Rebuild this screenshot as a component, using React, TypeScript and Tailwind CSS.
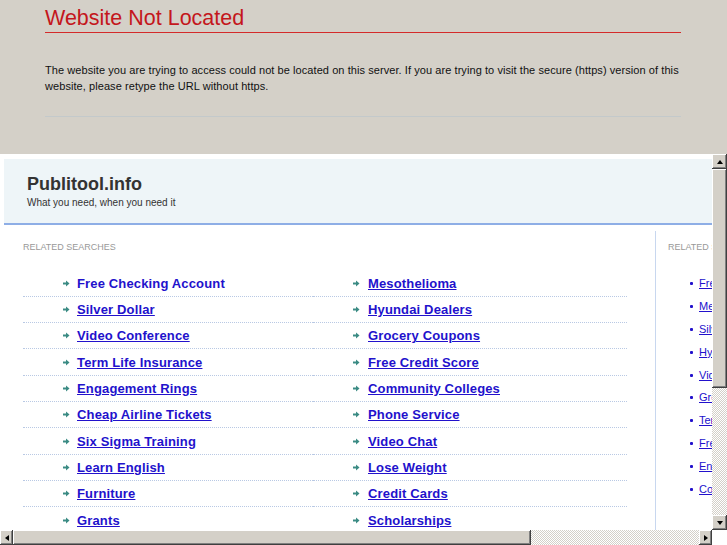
import React from "react";

const leftLinks = [
  "Free Checking Account",
  "Silver Dollar",
  "Video Conference",
  "Term Life Insurance",
  "Engagement Rings",
  "Cheap Airline Tickets",
  "Six Sigma Training",
  "Learn English",
  "Furniture",
  "Grants",
];

const rightLinks = [
  "Mesothelioma",
  "Hyundai Dealers",
  "Grocery Coupons",
  "Free Credit Score",
  "Community Colleges",
  "Phone Service",
  "Video Chat",
  "Lose Weight",
  "Credit Cards",
  "Scholarships",
];

const sideLinks = [
  "Free Checking Account",
  "Mesothelioma",
  "Silver Dollar",
  "Hyundai Dealers",
  "Video Conference",
  "Grocery Coupons",
  "Term Life Insurance",
  "Free Credit Score",
  "Engagement Rings",
  "Community Colleges",
];

function Arrow() {
  return (
    <svg width="7" height="7" viewBox="0 0 7 7" className="shrink-0">
      <rect x="0" y="2.5" width="3.5" height="2" fill="#3b8b84" />
      <polygon points="3,0.5 6.5,3.5 3,6.5" fill="#3b8b84" />
    </svg>
  );
}

const bevel =
  "bg-[#d4d0c8] shadow-[inset_-1px_-1px_0_#404040,inset_1px_1px_0_#ffffff,inset_-2px_-2px_0_#808080]";
const track =
  "bg-[image:repeating-conic-gradient(#d4d0c8_0%_25%,#ffffff_0%_50%)] bg-[length:2px_2px]";

function LinkCell({ text, first, right }: { text: string; first?: boolean; right?: boolean }) {
  return (
    <div
      className={`h-[26.33px] flex items-center border-b border-dotted border-[#b9c9e4] pl-[40px] ${
        right ? "gap-[8px]" : "gap-[7px]"
      }`}
    >
      <Arrow />
      <a
        href="#"
        className={`text-[13px] leading-[15px] font-bold tracking-[0.15px] text-[#2211cc] whitespace-nowrap ${
          first ? "no-underline" : "underline"
        }`}
      >
        {text}
      </a>
    </div>
  );
}

export default function App() {
  return (
    <div className="w-[727px] h-[545px] overflow-hidden bg-[#d4d0c8] font-['Liberation_Sans',Arial,sans-serif] flex flex-col">
      {/* Top notice */}
      <div className="h-[154px] shrink-0 pl-[45px]">
        <div className="w-[636px]">
          <h1 className="pt-[6px] pb-[2px] text-[21.5px] leading-[24px] text-[#c4161c] border-b border-[#d42a2a] font-normal">
            Website Not Located
          </h1>
          <p className="mt-[29px] text-[11px] leading-[16px] text-[#111111] tracking-[0.07px]">
            The website you are trying to access could not be located on this server. If you are trying to visit the
            secure (https) version of this website, please retype the URL without https.
          </p>
          <div className="mt-[22px] border-t border-[#c3c9cb]" />
        </div>
      </div>

      {/* Frame */}
      <div className="flex-1 bg-white flex flex-col">
        <div className="flex h-[376px]">
          <div className="w-[712px] h-[376px] overflow-hidden">
            <div className="w-[900px] pt-[5px] pl-[4px]">
              {/* Header */}
              <div className="h-[66px] bg-[#eef5f8] border-b-2 border-[#8eaee6] pl-[23px] pt-[15px]">
                <div className="text-[18px] leading-[20px] font-bold text-[#333333]">Publitool.info</div>
                <div className="mt-[2px] text-[10px] leading-[13px] text-[#333333]">
                  What you need, when you need it
                </div>
              </div>

              {/* Body */}
              <div className="flex">
                <div className="w-[651px] shrink-0 pl-[19px] pt-[16.5px]">
                  <div className="text-[9px] leading-[11px] text-[#999999]">RELATED SEARCHES</div>
                  <div className="mt-[18px] flex w-[604px]">
                    <div className="w-[290px]">
                      {leftLinks.map((t, i) => (
                        <LinkCell key={t} text={t} first={i === 0} />
                      ))}
                    </div>
                    <div className="w-[314px]">
                      {rightLinks.map((t) => (
                        <LinkCell key={t} text={t} right />
                      ))}
                    </div>
                  </div>
                </div>
                <div className="mt-[6px] w-[240px] h-[320px] border-l border-[#c8d7ef] pl-[12px] pt-[10.5px]">
                  <div className="text-[9px] leading-[11px] text-[#999999]">RELATED SEARCHES</div>
                  <ul className="mt-[19.5px]">
                    {sideLinks.map((t) => (
                      <li key={t} className="h-[22.9px] flex items-center pl-[21.5px]">
                        <span className="w-[3px] h-[3px] rounded-[1px] bg-[#2211cc] shrink-0" />
                        <a href="#" className="ml-[6.5px] text-[11px] leading-[13px] text-[#2211cc] underline whitespace-nowrap">
                          {t}
                        </a>
                      </li>
                    ))}
                  </ul>
                </div>
              </div>
            </div>
          </div>

          {/* Vertical scrollbar */}
          <div className="w-[15px] h-[376px] flex flex-col">
            <div className={`h-[15px] ${bevel} flex items-center justify-center`}>
              <div className="w-0 h-0 border-x-[3.5px] border-x-transparent border-b-[4px] border-b-black" />
            </div>
            <div className={`h-[219px] ${bevel}`} />
            <div className={`flex-1 ${track}`} />
            <div className={`h-[15px] ${bevel} flex items-center justify-center`}>
              <div className="w-0 h-0 border-x-[3.5px] border-x-transparent border-t-[4px] border-t-black" />
            </div>
          </div>
        </div>

        {/* Horizontal scrollbar */}
        <div className="flex h-[15px]">
          <div className="w-[712px] flex">
            <div className={`w-[13px] ${bevel} flex items-center justify-center`}>
              <div className="w-0 h-0 border-y-[3.5px] border-y-transparent border-r-[4px] border-r-black" />
            </div>
            <div className={`w-[518px] ${bevel}`} />
            <div className={`flex-1 ${track}`} />
            <div className={`w-[13px] ${bevel} flex items-center justify-center`}>
              <div className="w-0 h-0 border-y-[3.5px] border-y-transparent border-l-[4px] border-l-black" />
            </div>
          </div>
          <div className="w-[15px] bg-white" />
        </div>
      </div>
    </div>
  );
}
